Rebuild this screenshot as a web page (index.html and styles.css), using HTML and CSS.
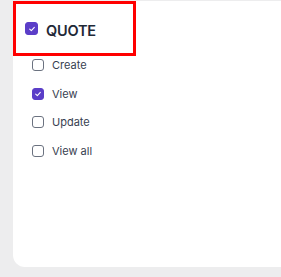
FILE: index.html
```html
<!DOCTYPE html>
<html>
<head>
<meta charset="utf-8">
<link rel="stylesheet" href="styles.css">
</head>
<body>
<div class="card">
  <div class="group-head">
    <span class="box box-checked big">
      <svg viewBox="0 0 12 12" width="8" height="8"><path d="M2.5 6.2 L5 8.5 L9.5 3.5" fill="none" stroke="#fff" stroke-width="1.6" stroke-linecap="round" stroke-linejoin="round"/></svg>
    </span>
    <span class="group-title">QUOTE</span>
  </div>
  <ul class="perms">
    <li class="perm"><span class="box"></span><span>Create</span></li>
    <li class="perm"><span class="box box-checked"><svg viewBox="0 0 12 12" width="8" height="8"><path d="M2.5 6.2 L5 8.5 L9.5 3.5" fill="none" stroke="#fff" stroke-width="1.6" stroke-linecap="round" stroke-linejoin="round"/></svg></span><span>View</span></li>
    <li class="perm"><span class="box"></span><span>Update</span></li>
    <li class="perm"><span class="box"></span><span>View all</span></li>
  </ul>
</div>
</body>
</html>
```
FILE: styles.css
```css
html, body {
  margin: 0;
  padding: 0;
  background: #ededee;
  width: 281px;
  height: 277px;
  overflow: hidden;
  font-family: Inter, "Noto Sans", sans-serif;
}
body {
  padding: 3px 0 0 13px;
  box-sizing: border-box;
}
.card {
  background: #ffffff;
  height: 266px;
  width: 280px;
  border-radius: 0 0 0 12px;
  position: relative;
}
.group-head {
  position: relative;
  display: flex;
  align-items: center;
  gap: 8px;
  height: 55px;
  margin-top: -2px;
  width: 123px;
  box-sizing: border-box;
  padding-left: 9px;
  border: 3px solid #ff0000;
}
.box {
  width: 12px;
  height: 12px;
  box-sizing: border-box;
  border: 1.3px solid #6b7280;
  border-radius: 3px;
  display: inline-flex;
  align-items: center;
  justify-content: center;
  flex: none;
}
.box-checked {
  background: #5b3ec8;
  border-color: #5b3ec8;
}
.box.big {
  width: 13px;
  height: 13px;
}
.group-title {
  font-size: 14.5px;
  font-weight: 600;
  color: #1f2937;
  letter-spacing: -0.2px;
  margin-top: 3px;
}
.perms {
  list-style: none;
  margin: 0;
  padding: 0 0 0 19px;
  display: flex;
  flex-direction: column;
  gap: 16.7px;
  margin-top: 3px;
}
.perm {
  display: flex;
  align-items: center;
  gap: 8px;
  height: 12px;
  font-size: 11px;
  color: #374151;
}
```
